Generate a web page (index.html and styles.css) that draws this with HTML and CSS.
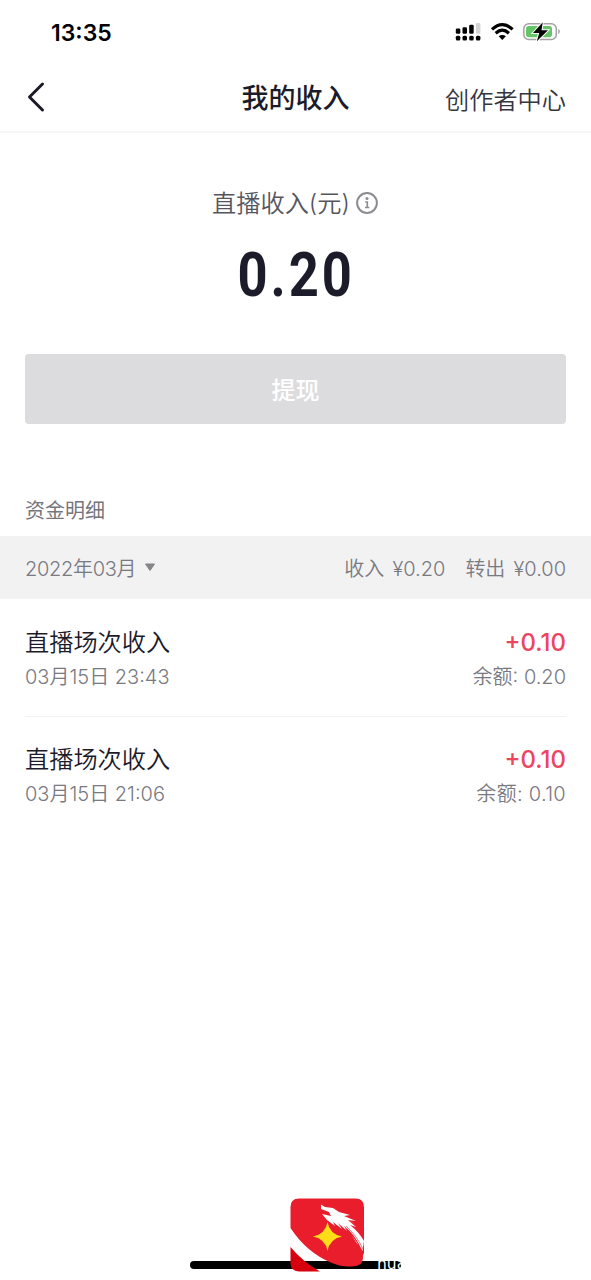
FILE: index.html
```html
<!DOCTYPE html>
<html lang="zh-CN">
<head>
<meta charset="utf-8">
<title>我的收入</title>
<link rel="stylesheet" href="styles.css">
</head>
<body>
<div class="screen">
  <div class="status">
    <span class="time">13:35</span>
    <svg class="status-icons" width="106" height="20" viewBox="0 0 106 20">
      <g fill="#000">
        <rect x=".8" y="6.500" width="4.500" height="5.200" rx="1.300"/>
        <rect x="7.500" y="5.300" width="4.500" height="6.400" rx="1.300"/>
        <rect x="14.200" y="2.800" width="4.500" height="8.900" rx="1.300"/>
        <rect x="20.900" y="1" width="4.500" height="10.700" rx="1.300" fill="#d4d4d4"/>
        <rect x=".8" y="13.800" width="4.500" height="4.700" rx="1.500"/>
        <rect x="7.500" y="13.800" width="4.500" height="4.700" rx="1.500"/>
        <rect x="14.200" y="13.800" width="4.500" height="4.700" rx="1.500"/>
        <rect x="20.900" y="13.800" width="4.500" height="4.700" rx="1.500"/>
      </g>
      <g fill="none" stroke="#000" stroke-width="3.200">
        <path d="M37 7.400Q47.300-2.200 57.600 7.400"/>
        <path d="M40.700 11.200Q47.300 5.200 53.900 11.200"/>
      </g>
      <path d="M43.700 14.300Q47.300 11.500 50.900 14.300L47.300 18Z"/>
      <rect x="68.800" y="1.700" width="32.500" height="15.800" rx="5" fill="#fff" stroke="#a3a3a3" stroke-width="1.500"/>
      <rect x="71" y="3.900" width="26" height="11.400" rx="2.800" fill="#65c466"/>
      <path d="M103.200 6.800Q106.500 9.500 103.200 12.300Z" fill="#a3a3a3"/>
      <path d="M87.800 .3 78 10.900H84.200L81.800 19.200 93 8.300H86.500Z" stroke="#fff" stroke-width="2" paint-order="stroke"/>
    </svg>
  </div>
  <header class="nav">
    <svg class="back" width="20" height="32" viewBox="0 0 20 32"><path d="M15.500 3 2.500 16 15.500 29" fill="none" stroke="#1b1b29" stroke-width="3" stroke-linecap="round" stroke-linejoin="round"/></svg>
    <h1 class="title">我的收入</h1>
    <span class="center-link">创作者中心</span>
  </header>
  <section class="summary">
    <div class="label"><span>直播收入(元)</span>
      <svg width="24" height="24" viewBox="0 0 24 24"><circle cx="12" cy="12" r="9.900" fill="none" stroke="#8b8b92" stroke-width="2"/><circle cx="12" cy="7.600" r="1.500" fill="#8b8b92"/><path d="M10.300 11h2v5.500M10 16.500h4.300" fill="none" stroke="#8b8b92" stroke-width="1.600"/></svg>
    </div>
    <div class="amount">0.20</div>
    <button class="withdraw">提现</button>
  </section>
  <h2 class="section-title">资金明细</h2>
  <div class="month">
    <span class="period">2022年03月</span>
    <svg class="caret" width="12" height="9" viewBox="0 0 12 9"><path d="M1.500 1h9L6 7.500Z" fill="#85858a" stroke="#85858a" stroke-width="1" stroke-linejoin="round"/></svg>
    <span class="income">收入 ¥0.20</span><span>转出 ¥0.00</span>
  </div>
  <ul class="records">
    <li class="record">
      <div class="line"><span>直播场次收入</span><span class="plus">+0.10</span></div>
      <div class="line sub"><span>03月15日 23:43</span><span>余额: 0.20</span></div>
    </li>
    <li class="record">
      <div class="line"><span>直播场次收入</span><span class="plus">+0.10</span></div>
      <div class="line sub"><span>03月15日 21:06</span><span class="wide">余额: 0.10</span></div>
    </li>
  </ul>
  <div class="home-bar"></div>
  <span class="mark">hua</span>
  <svg class="logo" width="75" height="75" viewBox="0 0 75 75">
    <path d="M0.500 9Q.5 .5 9 .5H65.500Q74 .5 74 9V43L72 41Q66 22 48 16Q59 31 72 55Q75 67 65 68Q54 70 42 65Q17 55 .5 30Z" fill="#e91d2c"/>
    <path d="M48 16Q66 22 74 42V57Q64 36 48 25Z" fill="#e91d2c"/>
    <path d="M73 50V58Q73 68 62 68L50 60 60 40Z" fill="#e91d2c"/>
    <path d="M.5 49Q13 64 30 73.500H9Q.5 73 .5 65Z" fill="#d7000f"/>
    <path d="M31 6.500 35 9 43 10 49 14 60 17 54 18 66 23 58 22 66 29 60 27Q69 34 74 43L72.500 53Q65 36 54 28L57 33 48 25 52 31 43 24 45 28 37 22 32 16 41 18 39 14 31 11Z" fill="#fff"/>
    <path d="M56 28Q67 38 73 51" fill="none" stroke="#e91d2c" stroke-width=".6"/>
    <path d="M37.500 24Q39.500 36 52 38.500 39.500 41 37.500 53 35.500 41 23 38.500 35.500 36 37.500 24Z" fill="#ffdc18"/>
  </svg>
</div>
</body>
</html>
```
FILE: styles.css
```css
* { box-sizing: border-box; }
body { margin: 0; background: #fff; font-family: Inter, "Noto Sans CJK SC", sans-serif; color: #1b1b29; }
.screen { position: relative; height: 1280px; overflow: hidden; display: flex; flex-direction: column; }
.status { height: 64px; padding: 22px 30px 0 51px; display: flex; justify-content: space-between; align-items: flex-start; flex: none; }
.time { font-size: 23px; line-height: 22px; font-weight: 600; color: #000; }
.status-icons { display: block; }
.nav { height: 69px; border-bottom: 2px solid #f7f7f8; padding: 0 25px; display: grid; grid-template-columns: 1fr auto 1fr; align-items: center; flex: none; }
.back { margin: -2px 0 0 2px; }
.title { margin: 0; padding-top: 2px; font-size: 27px; line-height: 40px; font-weight: 500; }
.center-link { justify-self: end; font-size: 24.2px; line-height: 36px; color: #353541; padding-top: 6px; font-weight: 350; }
.summary { padding: 53px 25px 0; display: flex; flex-direction: column; align-items: center; flex: none; }
.label { height: 36px; display: flex; align-items: center; gap: 5px; font-size: 24.2px; line-height: 36px; color: #55555e; font-weight: 350; }
.label svg { margin-top: -2px; }
.amount { font-family: Roboto, sans-serif; font-size: 61px; line-height: 70px; font-weight: 700; letter-spacing: 3.5px; padding-left: 2px; transform: scaleX(.86); margin-top: 18px; height: 70px; }
.withdraw { margin-top: 44px; width: 100%; height: 70px; border: 0; border-radius: 4px; background: #dcdcde; color: #fff; font: 500 24px/36px Inter, "Noto Sans CJK SC", sans-serif; padding-top: 4px; }
.section-title { margin: 72px 25px 10px; font-size: 20px; line-height: 30px; font-weight: 400; color: #75757c; }
.month { height: 63px; flex: none; background: #f2f2f3; display: flex; align-items: center; padding: 0 25px; font-size: 20px; color: #797981; font-weight: 350; word-spacing: 2.5px; }
.month span { margin-top: -1px; }
.period { letter-spacing: -.3px; }
.caret { margin-left: 8px; }
.month .income { margin-left: auto; margin-right: 20px; }
.records { list-style: none; margin: 0; padding: 0 25px; }
.record { height: 117px; padding-top: 25px; }
.record + .record { border-top: 1px solid #f1f1f2; padding-top: 24px; }
.line { display: flex; justify-content: space-between; font-size: 24.2px; line-height: 37px; font-weight: 350; }
.sub { font-size: 20px; line-height: 32px; color: #797981; }
.wide { letter-spacing: .3px; }
.plus { color: #ed455f; font-weight: 500; font-size: 24px; }
.home-bar { position: absolute; left: 190px; top: 1261px; width: 211px; height: 8px; border-radius: 4px; background: #000; }
.mark { position: absolute; left: 377px; top: 1255px; font: 400 15.500px/18px "DejaVu Sans", sans-serif; color: #fff; }
.logo { position: absolute; left: 290px; top: 1198px; }
```
